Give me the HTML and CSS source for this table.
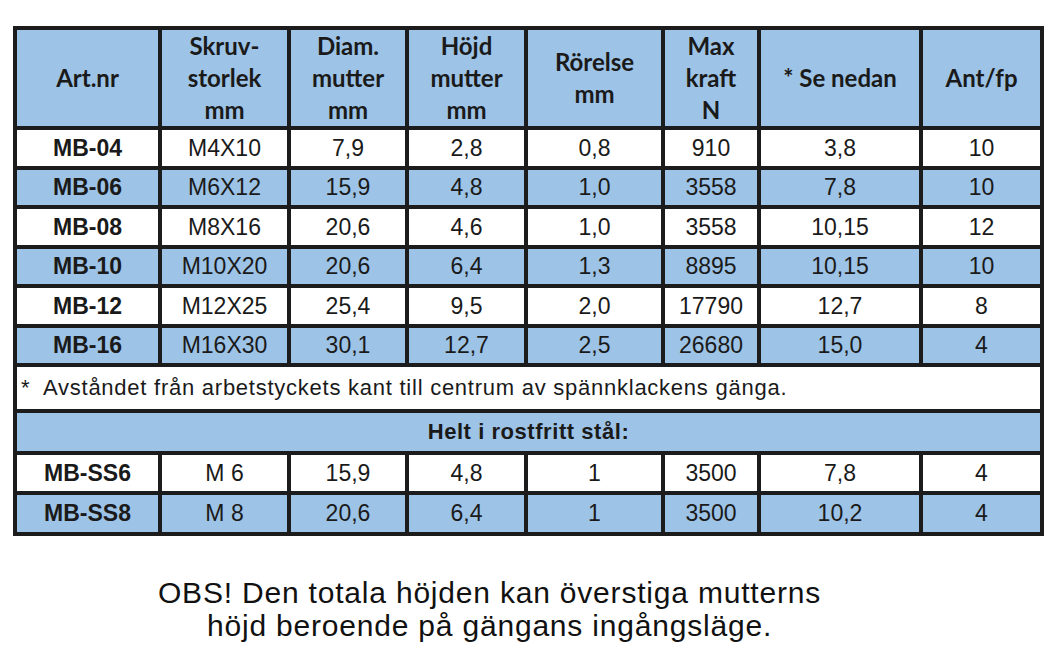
FILE: index.html
```html
<!DOCTYPE html>
<html lang="sv">
<head>
<meta charset="utf-8">
<title>MB spännklackar</title>
<link rel="stylesheet" href="styles.css">
</head>
<body>
<main class="page">
  <table class="spec">
    <colgroup>
      <col class="c1"><col class="c2"><col class="c3"><col class="c4">
      <col class="c5"><col class="c6"><col class="c7"><col class="c8">
    </colgroup>
    <thead>
      <tr class="head">
        <th>Art.nr</th>
        <th>Skruv-<br>storlek<br>mm</th>
        <th>Diam.<br>mutter<br>mm</th>
        <th>Höjd<br>mutter<br>mm</th>
        <th>Rörelse<br>mm</th>
        <th>Max<br>kraft<br>N</th>
        <th>* Se nedan</th>
        <th>Ant/fp</th>
      </tr>
    </thead>
    <tbody>
      <tr class="row"><td class="art">MB-04</td><td>M4X10</td><td>7,9</td><td>2,8</td><td>0,8</td><td>910</td><td>3,8</td><td>10</td></tr>
      <tr class="row alt"><td class="art">MB-06</td><td>M6X12</td><td>15,9</td><td>4,8</td><td>1,0</td><td>3558</td><td>7,8</td><td>10</td></tr>
      <tr class="row"><td class="art">MB-08</td><td>M8X16</td><td>20,6</td><td>4,6</td><td>1,0</td><td>3558</td><td>10,15</td><td>12</td></tr>
      <tr class="row alt"><td class="art">MB-10</td><td>M10X20</td><td>20,6</td><td>6,4</td><td>1,3</td><td>8895</td><td>10,15</td><td>10</td></tr>
      <tr class="row"><td class="art">MB-12</td><td>M12X25</td><td>25,4</td><td>9,5</td><td>2,0</td><td>17790</td><td>12,7</td><td>8</td></tr>
      <tr class="row alt"><td class="art">MB-16</td><td>M16X30</td><td>30,1</td><td>12,7</td><td>2,5</td><td>26680</td><td>15,0</td><td>4</td></tr>
      <tr class="note-row"><td class="note" colspan="8"><span class="star">*</span>Avståndet från arbetstyckets kant till centrum av spännklackens gänga.</td></tr>
      <tr class="section-row"><th class="section" colspan="8">Helt i rostfritt stål:</th></tr>
      <tr class="row ss"><td class="art">MB-SS6</td><td>M 6</td><td>15,9</td><td>4,8</td><td>1</td><td>3500</td><td>7,8</td><td>4</td></tr>
      <tr class="row ss alt last"><td class="art">MB-SS8</td><td>M 8</td><td>20,6</td><td>6,4</td><td>1</td><td>3500</td><td>10,2</td><td>4</td></tr>
    </tbody>
  </table>
  <p class="obs">OBS! Den totala höjden kan överstiga mutterns<br>höjd beroende på gängans ingångsläge.</p>
</main>
</body>
</html>
```
FILE: styles.css
```css
html, body {
  margin: 0;
  padding: 0;
  background: #ffffff;
}

.page {
  padding: 26px 0 0 13px;
  font-family: "Liberation Sans", Arial, sans-serif;
  color: #1a1a1a;
}

.spec {
  border-collapse: collapse;
  table-layout: fixed;
  width: 1031px;
  border: 4px solid #1c1c1c;
}

.c1 { width: 145px; }
.c2 { width: 129px; }
.c3 { width: 118px; }
.c4 { width: 119px; }
.c5 { width: 137px; }
.c6 { width: 96px; }
.c7 { width: 162px; }
.c8 { width: 121px; }

.spec th,
.spec td {
  border: 4px solid #1c1c1c;
  padding: 0;
  text-align: center;
  vertical-align: middle;
}

.head th {
  background: #9dc3e6;
  height: 96px;
  font-family: "Lato", "DejaVu Sans", sans-serif;
  font-weight: 700;
  font-size: 24px;
  line-height: 32px;
  color: #1a1a1a;
}

.row td {
  height: 35.5px;
  font-size: 23px;
  line-height: 24px;
  background: #ffffff;
}

.row.alt td {
  background: #9dc3e6;
}

.row td.art {
  font-weight: 700;
}

.note {
  height: 42px;
  font-size: 22px;
  letter-spacing: 0.75px;
  line-height: 24px;
  background: #ffffff;
  text-align: left !important;
  padding-left: 4px !important;
}

.star {
  display: inline-block;
  width: 22px;
}

.section {
  height: 37.5px;
  background: #9dc3e6;
  font-size: 22px;
  letter-spacing: 0.55px;
  font-weight: 700;
}

.row.ss td {
  height: 36.5px;
}

.obs {
  margin: 40px 0 0 0;
  padding-right: 97px;
  text-align: center;
  font-size: 30px;
  letter-spacing: 0.8px;
  line-height: 33px;
  color: #111111;
}
```
